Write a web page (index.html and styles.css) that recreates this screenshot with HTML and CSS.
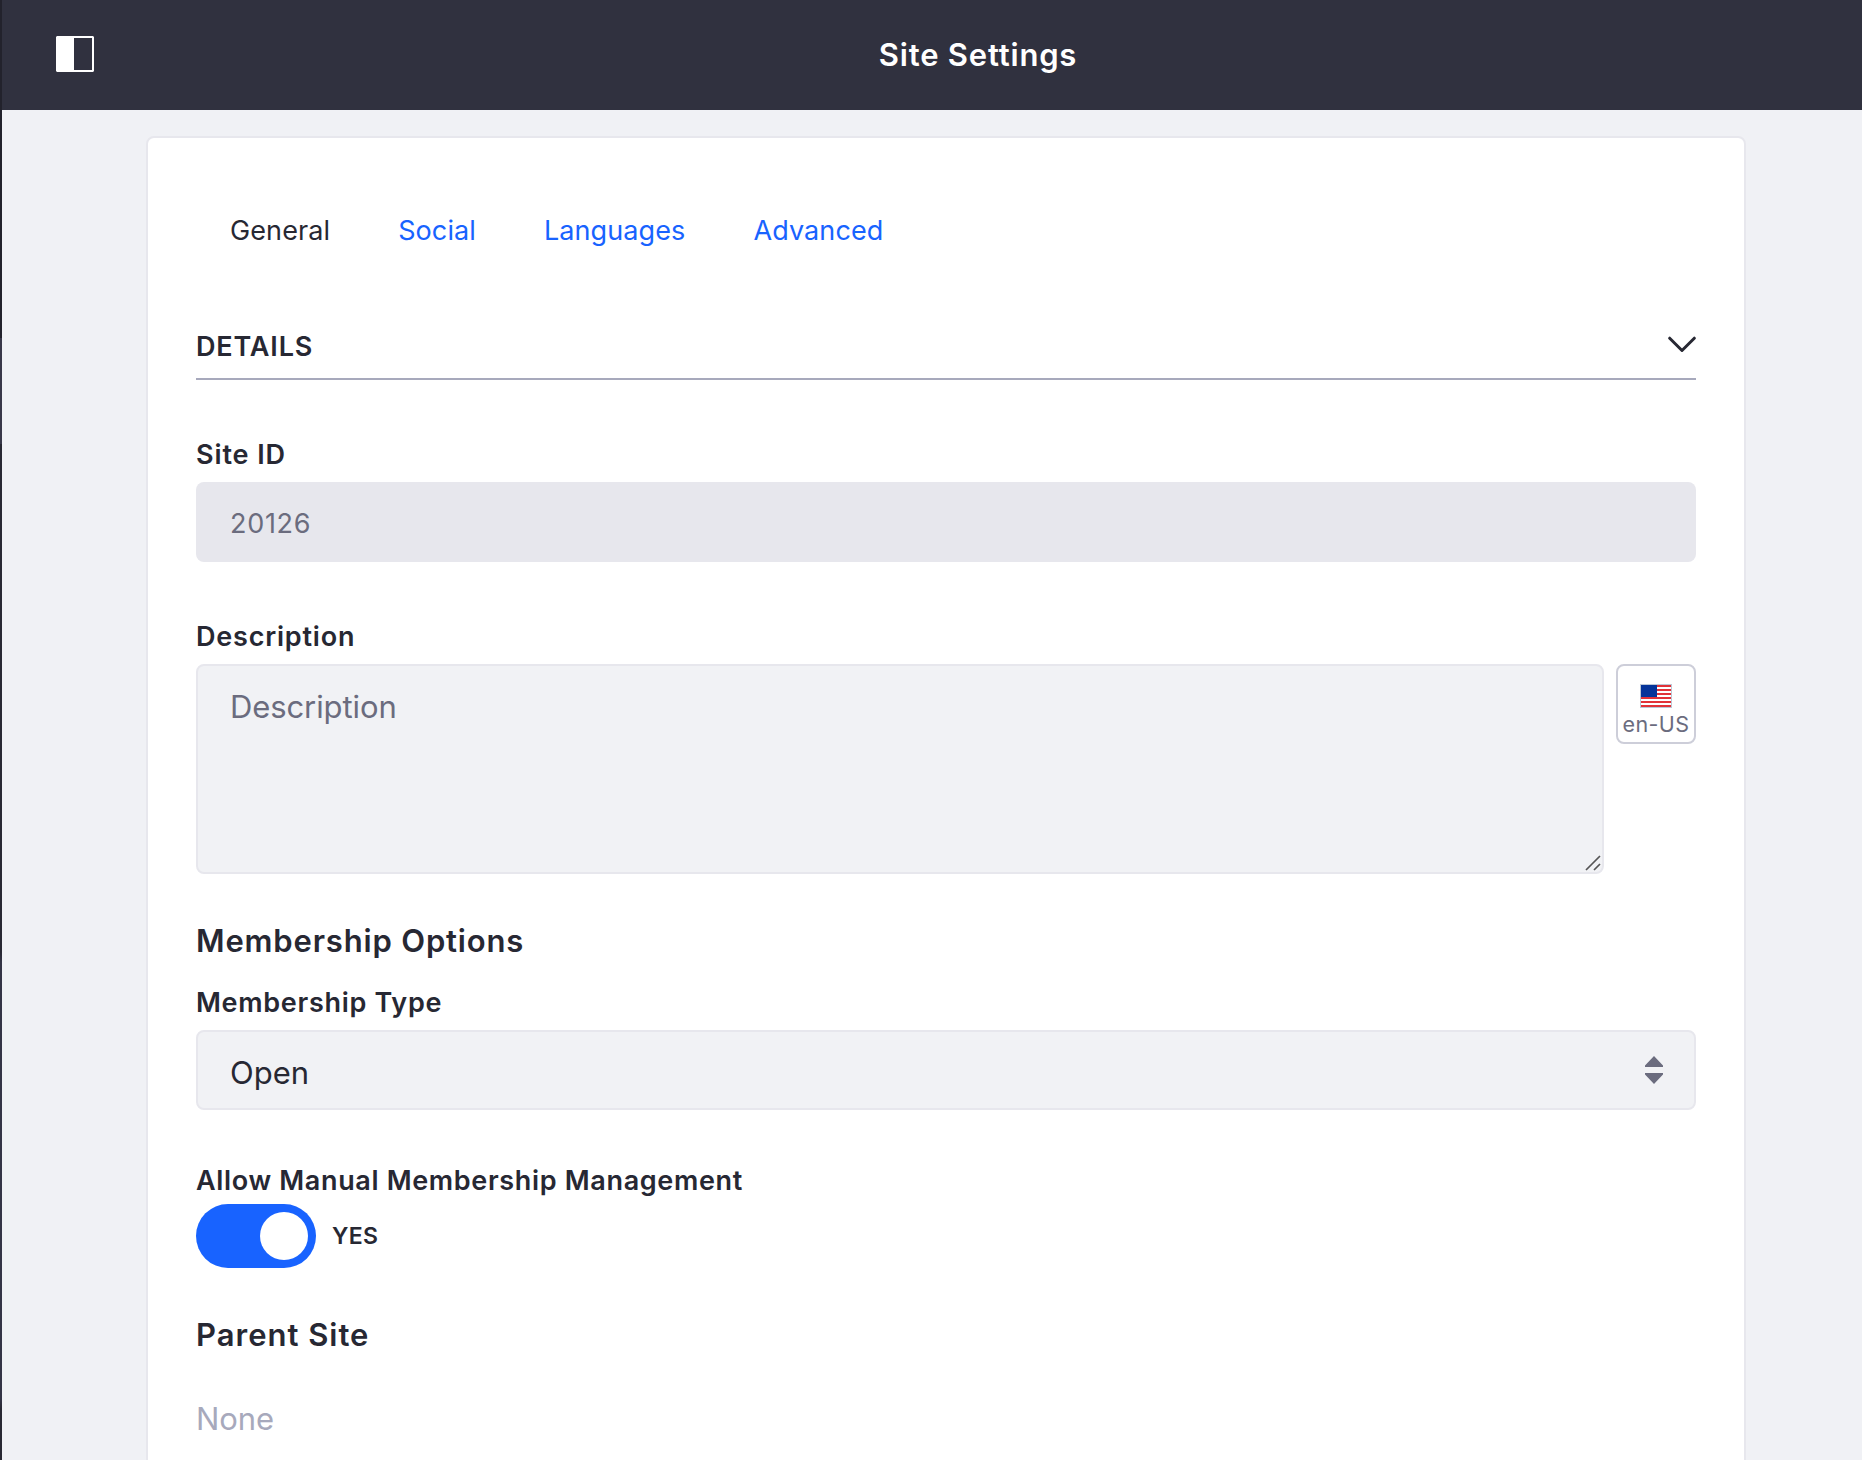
FILE: index.html
```html
<!DOCTYPE html>
<html lang="en">
<head>
<meta charset="utf-8">
<title>Site Settings</title>
<link rel="stylesheet" href="styles.css">
</head>
<body>
<div class="app">
  <aside class="sidebar-edge"><div class="edge-top"></div><div class="edge-active"></div><div class="edge-rest"></div></aside>
  <div class="main">
    <header class="control-menu">
      <button class="menu-toggle" type="button" aria-label="Toggle menu">
        <svg width="38" height="36" viewBox="0 0 38 36"><path fill="#fff" fill-rule="evenodd" d="M1 0h36l1 1v34l-1 1H1l-1-1V1zM18 2v32h18V2z"/></svg>
      </button>
      <h1 class="page-title">Site Settings</h1>
    </header>
    <main class="sheet">
      <nav class="tabs">
        <a class="tab tab-active">General</a>
        <a class="tab">Social</a>
        <a class="tab">Languages</a>
        <a class="tab">Advanced</a>
      </nav>
      <div class="panel-header">
        <span class="panel-title">DETAILS</span>
        <svg class="chevron" width="28" height="17" viewBox="0 0 28 17"><path d="M1.7 2.2 14 14.5 26.3 2.2" fill="none" stroke="#272833" stroke-width="3" stroke-linecap="round" stroke-linejoin="round"/></svg>
      </div>
      <label class="label label-site" for="siteId">Site ID</label>
      <input class="input" id="siteId" value="20126" disabled>
      <label class="label label-desc" for="description">Description</label>
      <div class="input-group">
        <div class="textarea-wrap">
          <textarea class="textarea" id="description" placeholder="Description"></textarea>
          <svg class="grip" width="16" height="16" viewBox="0 0 16 16"><path d="M1 15 15 1M9 15l6-6" fill="none" stroke="#555" stroke-width="1.7"/></svg>
        </div>
        <button class="locale" type="button">
          <svg width="32" height="24" viewBox="0 0 32 24"><path fill="#bcc8d6" d="M0 0h32v24H0z"/><path fill="#fff" d="M1 1h30v22H1z"/><path fill="#e13238" d="M1 1h30v2H1zM1 5h30v2H1zM1 9h30v2H1zM1 13h30v2H1zM1 17h30v2H1zM1 21h30v2H1z"/><path fill="#05349a" d="M1 1h16v12H1z"/></svg>
          <span class="locale-code">en-US</span>
        </button>
      </div>
      <h2 class="heading heading-options">Membership Options</h2>
      <label class="label label-type">Membership Type</label>
      <div class="select" role="combobox">
        <span class="select-value">Open</span>
        <svg width="18" height="28" viewBox="0 0 18 28"><path fill="#6b6c7e" d="M9 0 18 9.5V11H0V9.5zM9 28 0 18.500V17h18v1.500z"/></svg>
      </div>
      <label class="label label-allow">Allow Manual Membership Management</label>
      <div class="toggle-row">
        <span class="toggle"><span class="knob"></span></span>
        <span class="toggle-text">YES</span>
      </div>
      <h2 class="heading heading-parent">Parent Site</h2>
      <p class="none">None</p>
    </main>
  </div>
</div>
</body>
</html>
```

FILE: styles.css
```css
* { box-sizing: border-box; }
body {
  margin: 0;
  font-family: Inter, "Liberation Sans", sans-serif;
  font-size: 31px;
  color: #272833;
  background: #f0f1f5;
}
.app { display: flex; height: 1460px; overflow: hidden; }
.sidebar-edge { width: 2px; flex: none; display: flex; flex-direction: column; }
.edge-top { height: 338px; background: #22222c; }
.edge-active { height: 106px; background: #383849; }
.edge-rest { flex: 1; background: linear-gradient(#282833 50%, #343446 51%, #343446 94%, #282833 95%); }
.main { flex: 1; display: flex; flex-direction: column; }
.control-menu { height: 110px; flex: none; display: flex; align-items: center; background: #30313f; }
.menu-toggle { width: 92px; height: 36px; margin-top: -2px; padding: 0 0 0 54px; border: 0; background: none; flex: none; }
.menu-toggle svg { display: block; }
.page-title {
  flex: 1; margin: 0; text-align: center; color: #fff;
  font-size: 31px; font-weight: 600; line-height: 40px; letter-spacing: 0.8px;
}
.sheet {
  width: 1600px; height: 1400px; flex: none; margin: 26px 0 0 144px; padding: 75px 48px 0;
  border: 2px solid #e7e7ed; border-radius: 8px; background: #fff;
  display: flex; flex-direction: column;
}
.tabs { display: flex; gap: 68px; padding-left: 34px; }
.tab { font-size: 27px; line-height: 36px; letter-spacing: 0.1px; color: #1863ff; }
.tab-active { color: #272833; }
.panel-header {
  display: flex; justify-content: space-between; align-items: flex-start;
  margin-top: 80px; height: 51px; border-bottom: 2px solid #a7a9bc;
}
.panel-title { font-size: 27px; font-weight: 600; line-height: 36px; letter-spacing: 0.85px; }
.chevron { margin-top: 7px; }
.label { font-size: 27px; font-weight: 600; line-height: 36px; letter-spacing: 0.7px; white-space: nowrap; }
.label-site { margin-top: 57px; letter-spacing: 0.9px; }
.input {
  display: block; height: 80px; margin-top: 9px; padding: 3px 34px 0; border: 0; border-radius: 8px;
  background: #e7e7ed; color: #6b6c7e; font: 27px Inter, "Liberation Sans", sans-serif; letter-spacing: 0.7px;
}
.label-desc { margin-top: 57px; letter-spacing: 0.8px; }
.input-group { display: flex; gap: 12px; height: 210px; margin-top: 9px; }
.textarea-wrap { position: relative; flex: 1; }
.textarea {
  display: block; width: 100%; height: 210px; padding: 21px 32px; resize: none;
  border: 2px solid #e7e7ed; border-radius: 8px; background: #f1f2f5;
  font: 31px/40px Inter, "Liberation Sans", sans-serif; letter-spacing: -0.1px;
}
.textarea::placeholder { color: #6b6c7e; opacity: 1; }
.grip { position: absolute; right: 3px; bottom: 3px; }
.locale {
  width: 80px; height: 80px; padding: 18px 0 0; display: flex; flex-direction: column; align-items: center;
  border: 2px solid #cdced9; border-radius: 8px; background: #fff; color: #6b6c7e;
  font-family: Inter, "Liberation Sans", sans-serif;
}
.locale svg { flex: none; }
.locale-code { font-size: 21.5px; line-height: 24px; letter-spacing: 0.4px; margin-top: 4px; white-space: nowrap; }
.heading { margin: 0; font-size: 31px; font-weight: 600; line-height: 40px; letter-spacing: 0.83px; }
.heading-options { margin-top: 47px; }
.label-type { margin-top: 24px; }
.select {
  display: flex; justify-content: space-between; align-items: flex-start; height: 80px; margin-top: 9px;
  padding: 21px 31px 0 32px; border: 2px solid #e7e7ed; border-radius: 8px; background: #f1f2f5;
}
.select-value { line-height: 40px; }
.select svg { margin-top: 3px; }
.label-allow { margin-top: 53px; letter-spacing: 0.66px; }
.toggle-row { display: flex; align-items: center; gap: 16px; margin-top: 5px; }
.toggle { width: 120px; height: 64px; padding: 8px; border-radius: 32px; background: #1863ff; display: flex; justify-content: flex-end; }
.knob { width: 48px; height: 48px; border-radius: 50%; background: #fff; }
.toggle-text { font-size: 23px; font-weight: 600; line-height: 32px; letter-spacing: 0.3px; }
.heading-parent { margin-top: 47px; letter-spacing: 1px; }
.none { margin: 44px 0 0; line-height: 40px; letter-spacing: -0.1px; color: #a7a9bc; }
```
